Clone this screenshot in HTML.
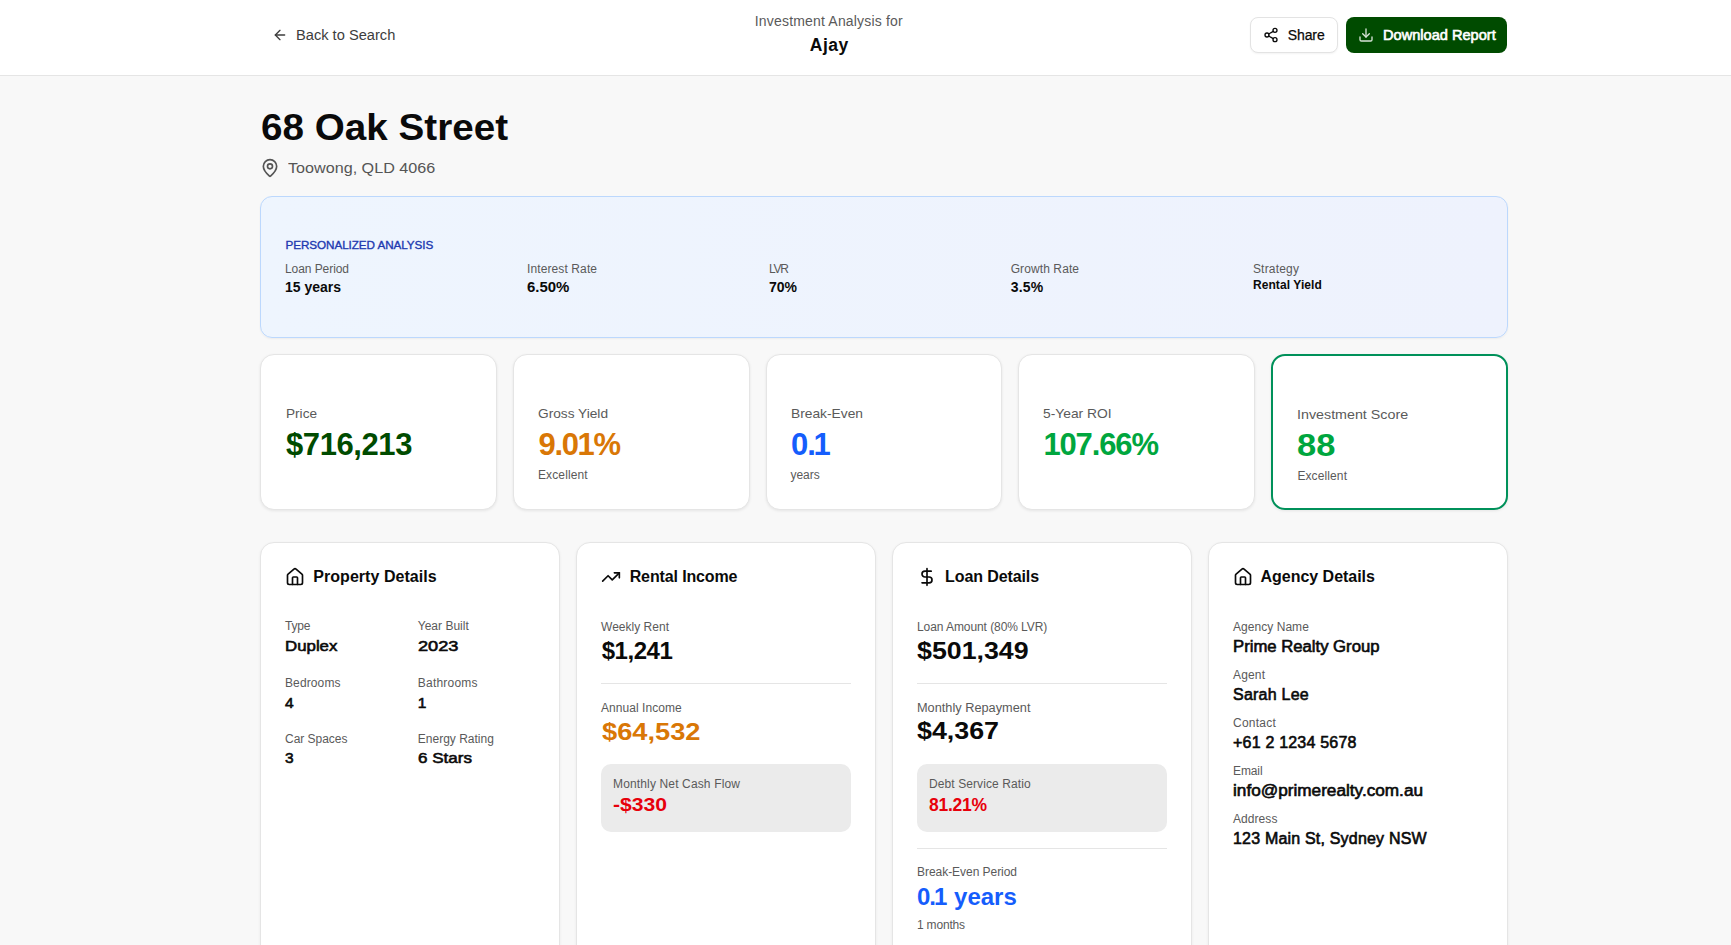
<!DOCTYPE html>
<html><head><meta charset="utf-8"><title>68 Oak Street - Investment Analysis</title>
<style>
html,body{margin:0;padding:0;}
body{width:1731px;height:945px;overflow:hidden;background:#f8f8f8;font-family:"Liberation Sans",sans-serif;position:relative;}
.t{position:absolute;white-space:nowrap;}
</style></head><body>
<div style="position:absolute;left:0px;top:0px;width:1731px;height:76px;box-sizing:border-box;background:#ffffff;border-bottom:1px solid #e5e5e5;"></div>
<div style="position:absolute;left:1250px;top:17px;width:88px;height:36px;box-sizing:border-box;background:#fff;border:1px solid #e3e3e3;border-radius:8px;box-shadow:0 1px 2px rgba(0,0,0,0.05);"></div>
<div style="position:absolute;left:1346px;top:17px;width:161px;height:36px;box-sizing:border-box;background:#004b00;border-radius:8px;"></div>
<div style="position:absolute;left:260px;top:196px;width:1248px;height:142px;box-sizing:border-box;background:linear-gradient(90deg,#eef5fe,#eef2fd);border:1px solid #bcd8fd;border-radius:12px;box-shadow:0 1px 2px rgba(0,0,0,0.05);"></div>
<div style="position:absolute;left:260.0px;top:354px;width:236.8px;height:156px;box-sizing:border-box;background:#fff;border:1px solid #e5e5e5;border-radius:14px;box-shadow:0 1px 3px rgba(0,0,0,0.08);"></div>
<div style="position:absolute;left:512.8px;top:354px;width:236.8px;height:156px;box-sizing:border-box;background:#fff;border:1px solid #e5e5e5;border-radius:14px;box-shadow:0 1px 3px rgba(0,0,0,0.08);"></div>
<div style="position:absolute;left:765.6px;top:354px;width:236.8px;height:156px;box-sizing:border-box;background:#fff;border:1px solid #e5e5e5;border-radius:14px;box-shadow:0 1px 3px rgba(0,0,0,0.08);"></div>
<div style="position:absolute;left:1018.4px;top:354px;width:236.8px;height:156px;box-sizing:border-box;background:#fff;border:1px solid #e5e5e5;border-radius:14px;box-shadow:0 1px 3px rgba(0,0,0,0.08);"></div>
<div style="position:absolute;left:1271.2px;top:354px;width:236.8px;height:156px;box-sizing:border-box;background:#fff;border:2px solid #00915a;border-radius:14px;box-shadow:0 1px 3px rgba(0,0,0,0.08);"></div>
<div style="position:absolute;left:260px;top:542px;width:300px;height:440px;box-sizing:border-box;background:#fff;border:1px solid #e5e5e5;border-radius:14px;box-shadow:0 1px 3px rgba(0,0,0,0.06);"></div>
<div style="position:absolute;left:576px;top:542px;width:300px;height:440px;box-sizing:border-box;background:#fff;border:1px solid #e5e5e5;border-radius:14px;box-shadow:0 1px 3px rgba(0,0,0,0.06);"></div>
<div style="position:absolute;left:892px;top:542px;width:300px;height:440px;box-sizing:border-box;background:#fff;border:1px solid #e5e5e5;border-radius:14px;box-shadow:0 1px 3px rgba(0,0,0,0.06);"></div>
<div style="position:absolute;left:1208px;top:542px;width:300px;height:440px;box-sizing:border-box;background:#fff;border:1px solid #e5e5e5;border-radius:14px;box-shadow:0 1px 3px rgba(0,0,0,0.06);"></div>
<div style="position:absolute;left:601px;top:683px;width:250px;height:1px;box-sizing:border-box;background:#e5e5e5;"></div>
<div style="position:absolute;left:917px;top:683px;width:250px;height:1px;box-sizing:border-box;background:#e5e5e5;"></div>
<div style="position:absolute;left:917px;top:848px;width:250px;height:1px;box-sizing:border-box;background:#e5e5e5;"></div>
<div style="position:absolute;left:601px;top:764px;width:250px;height:68px;box-sizing:border-box;background:#ebebeb;border-radius:10px;"></div>
<div style="position:absolute;left:917px;top:764px;width:250px;height:68px;box-sizing:border-box;background:#ebebeb;border-radius:10px;"></div>
<svg style="position:absolute;left:272px;top:27px;color:#3d3d3d" width="16" height="16" viewBox="0 0 24 24" fill="none" stroke="currentColor" stroke-width="2" stroke-linecap="round" stroke-linejoin="round"><path d="m12 19-7-7 7-7"/><path d="M19 12H5"/></svg>
<svg style="position:absolute;left:1263px;top:27px;color:#0a0a0a" width="16" height="16" viewBox="0 0 24 24" fill="none" stroke="currentColor" stroke-width="2" stroke-linecap="round" stroke-linejoin="round"><circle cx="18" cy="5" r="3"/><circle cx="6" cy="12" r="3"/><circle cx="18" cy="19" r="3"/><line x1="8.59" x2="15.42" y1="13.51" y2="17.49"/><line x1="15.41" x2="8.59" y1="6.51" y2="10.49"/></svg>
<svg style="position:absolute;left:1358px;top:27px;color:#d7e3d7" width="16" height="16" viewBox="0 0 24 24" fill="none" stroke="currentColor" stroke-width="2" stroke-linecap="round" stroke-linejoin="round"><path d="M21 15v4a2 2 0 0 1-2 2H5a2 2 0 0 1-2-2v-4"/><polyline points="7 10 12 15 17 10"/><line x1="12" x2="12" y1="15" y2="3"/></svg>
<svg style="position:absolute;left:259.5px;top:157.5px;color:#555555" width="20" height="20" viewBox="0 0 24 24" fill="none" stroke="currentColor" stroke-width="2" stroke-linecap="round" stroke-linejoin="round"><path d="M20 10c0 4.993-5.539 10.193-7.399 11.799a1 1 0 0 1-1.202 0C9.539 20.193 4 14.993 4 10a8 8 0 0 1 16 0"/><circle cx="12" cy="10" r="3"/></svg>
<svg style="position:absolute;left:285px;top:566.8px;color:#0a0a0a" width="20" height="20" viewBox="0 0 24 24" fill="none" stroke="currentColor" stroke-width="2" stroke-linecap="round" stroke-linejoin="round"><path d="M15 21v-8a1 1 0 0 0-1-1h-4a1 1 0 0 0-1 1v8"/><path d="M3 10a2 2 0 0 1 .709-1.528l7-5.999a2 2 0 0 1 2.582 0l7 5.999A2 2 0 0 1 21 10v9a2 2 0 0 1-2 2H5a2 2 0 0 1-2-2z"/></svg>
<svg style="position:absolute;left:601px;top:567px;color:#0a0a0a" width="20" height="20" viewBox="0 0 24 24" fill="none" stroke="currentColor" stroke-width="2" stroke-linecap="round" stroke-linejoin="round"><polyline points="22 7 13.5 15.5 8.5 10.5 2 17"/><polyline points="16 7 22 7 22 13"/></svg>
<svg style="position:absolute;left:917px;top:567px;color:#0a0a0a" width="20" height="20" viewBox="0 0 24 24" fill="none" stroke="currentColor" stroke-width="2" stroke-linecap="round" stroke-linejoin="round"><line x1="12" x2="12" y1="2" y2="22"/><path d="M17 5H9.5a3.5 3.5 0 0 0 0 7h5a3.5 3.5 0 0 1 0 7H6"/></svg>
<svg style="position:absolute;left:1233px;top:566.8px;color:#0a0a0a" width="20" height="20" viewBox="0 0 24 24" fill="none" stroke="currentColor" stroke-width="2" stroke-linecap="round" stroke-linejoin="round"><path d="M15 21v-8a1 1 0 0 0-1-1h-4a1 1 0 0 0-1 1v8"/><path d="M3 10a2 2 0 0 1 .709-1.528l7-5.999a2 2 0 0 1 2.582 0l7 5.999A2 2 0 0 1 21 10v9a2 2 0 0 1-2 2H5a2 2 0 0 1-2-2z"/></svg>
<div class="t" style="left:296.00px;top:27.90px;font-size:14px;line-height:14px;color:#3d3d3d;transform:scaleX(1.0458);transform-origin:0 0;">Back to Search</div>
<div class="t" style="left:754.80px;top:14.30px;font-size:14px;line-height:14px;color:#5a5a5a;letter-spacing:0.180px;">Investment Analysis for</div>
<div class="t" style="left:809.80px;top:36.62px;font-size:17.5px;line-height:17.5px;color:#0a0a0a;font-weight:700;letter-spacing:0.450px;">Ajay</div>
<div class="t" style="left:1287.70px;top:27.80px;font-size:14px;line-height:14px;color:#0a0a0a;letter-spacing:-0.088px;-webkit-text-stroke:0.25px #0a0a0a;">Share</div>
<div class="t" style="left:1382.50px;top:27.90px;font-size:14px;line-height:14px;color:#ffffff;-webkit-text-stroke:0.6px currentColor;transform:scaleX(1.0421);transform-origin:0 0;">Download Report</div>
<div class="t" style="left:261.00px;top:109.05px;font-size:37px;line-height:37px;color:#0a0a0a;font-weight:700;transform:scaleX(1.0444);transform-origin:0 0;">68 Oak Street</div>
<div class="t" style="left:287.50px;top:160.02px;font-size:15.5px;line-height:15.5px;color:#555555;transform:scaleX(1.0418);transform-origin:0 0;">Toowong, QLD 4066</div>
<div class="t" style="left:285.50px;top:238.96px;font-size:11.7px;line-height:11.7px;color:#2139b0;letter-spacing:-0.072px;-webkit-text-stroke:0.35px currentColor;">PERSONALIZED ANALYSIS</div>
<div class="t" style="left:285.00px;top:262.70px;font-size:12px;line-height:12px;color:#5a5a5a;letter-spacing:-0.070px;">Loan Period</div>
<div class="t" style="left:285.00px;top:280.00px;font-size:14px;line-height:14px;color:#0a0a0a;font-weight:700;">15 years</div>
<div class="t" style="left:527.00px;top:262.70px;font-size:12px;line-height:12px;color:#5a5a5a;letter-spacing:0.108px;">Interest Rate</div>
<div class="t" style="left:527.00px;top:280.00px;font-size:14px;line-height:14px;color:#0a0a0a;font-weight:700;transform:scaleX(1.0680);transform-origin:0 0;">6.50%</div>
<div class="t" style="left:769.00px;top:262.70px;font-size:12px;line-height:12px;color:#5a5a5a;letter-spacing:-1.225px;">LVR</div>
<div class="t" style="left:769.00px;top:280.00px;font-size:14px;line-height:14px;color:#0a0a0a;font-weight:700;">70%</div>
<div class="t" style="left:1010.70px;top:262.70px;font-size:12px;line-height:12px;color:#5a5a5a;letter-spacing:0.095px;">Growth Rate</div>
<div class="t" style="left:1010.70px;top:280.00px;font-size:14px;line-height:14px;color:#0a0a0a;font-weight:700;letter-spacing:0.167px;">3.5%</div>
<div class="t" style="left:1252.90px;top:262.70px;font-size:12px;line-height:12px;color:#5a5a5a;letter-spacing:0.200px;">Strategy</div>
<div class="t" style="left:1252.90px;top:278.70px;font-size:12px;line-height:12px;color:#0a0a0a;font-weight:700;letter-spacing:0.086px;">Rental Yield</div>
<div class="t" style="left:285.70px;top:406.55px;font-size:13px;line-height:13px;color:#5a5a5a;transform:scaleX(1.0473);transform-origin:0 0;">Price</div>
<div class="t" style="left:286.00px;top:428.65px;font-size:31px;line-height:31px;color:#004b00;font-weight:700;letter-spacing:-0.414px;">$716,213</div>
<div class="t" style="left:538.00px;top:406.55px;font-size:13px;line-height:13px;color:#5a5a5a;transform:scaleX(1.0534);transform-origin:0 0;">Gross Yield</div>
<div class="t" style="left:538.60px;top:428.65px;font-size:31px;line-height:31px;color:#d97706;font-weight:700;letter-spacing:-1.375px;">9.01%</div>
<div class="t" style="left:538.00px;top:468.70px;font-size:12px;line-height:12px;color:#5a5a5a;letter-spacing:0.112px;">Excellent</div>
<div class="t" style="left:791.00px;top:406.55px;font-size:13px;line-height:13px;color:#5a5a5a;transform:scaleX(1.0604);transform-origin:0 0;">Break-Even</div>
<div class="t" style="left:791.00px;top:428.65px;font-size:31px;line-height:31px;color:#155dfc;font-weight:700;">0<span style="margin-left:-1px">.</span><span style="margin-left:-2.5px">1</span></div>
<div class="t" style="left:790.40px;top:468.70px;font-size:12px;line-height:12px;color:#5a5a5a;letter-spacing:-0.013px;">years</div>
<div class="t" style="left:1043.00px;top:406.55px;font-size:13px;line-height:13px;color:#5a5a5a;transform:scaleX(1.0627);transform-origin:0 0;">5-Year ROI</div>
<div class="t" style="left:1043.40px;top:428.65px;font-size:31px;line-height:31px;color:#00a63e;font-weight:700;letter-spacing:-1.133px;">107.66%</div>
<div class="t" style="left:1297.40px;top:407.65px;font-size:13px;line-height:13px;color:#5a5a5a;transform:scaleX(1.0984);transform-origin:0 0;">Investment Score</div>
<div class="t" style="left:1297.40px;top:429.85px;font-size:31px;line-height:31px;color:#00a63e;font-weight:700;transform:scaleX(1.1130);transform-origin:0 0;">88</div>
<div class="t" style="left:1297.40px;top:470.10px;font-size:12px;line-height:12px;color:#5a5a5a;letter-spacing:0.112px;">Excellent</div>
<div class="t" style="left:313.30px;top:568.70px;font-size:16px;line-height:16px;color:#0a0a0a;font-weight:700;letter-spacing:0.040px;">Property Details</div>
<div class="t" style="left:629.70px;top:568.70px;font-size:16px;line-height:16px;color:#0a0a0a;font-weight:700;letter-spacing:-0.129px;">Rental Income</div>
<div class="t" style="left:945.10px;top:568.70px;font-size:16px;line-height:16px;color:#0a0a0a;font-weight:700;letter-spacing:-0.105px;">Loan Details</div>
<div class="t" style="left:1260.60px;top:568.70px;font-size:16px;line-height:16px;color:#0a0a0a;font-weight:700;letter-spacing:-0.031px;">Agency Details</div>
<div class="t" style="left:285.00px;top:620.30px;font-size:12px;line-height:12px;color:#5a5a5a;letter-spacing:-0.200px;">Type</div>
<div class="t" style="left:285.00px;top:638.33px;font-size:15.5px;line-height:15.5px;color:#0a0a0a;-webkit-text-stroke:0.6px currentColor;transform:scaleX(1.0860);transform-origin:0 0;">Duplex</div>
<div class="t" style="left:417.80px;top:620.30px;font-size:12px;line-height:12px;color:#5a5a5a;">Year Built</div>
<div class="t" style="left:417.80px;top:638.33px;font-size:15.5px;line-height:15.5px;color:#0a0a0a;-webkit-text-stroke:0.6px currentColor;transform:scaleX(1.1739);transform-origin:0 0;">2023</div>
<div class="t" style="left:285.00px;top:676.80px;font-size:12px;line-height:12px;color:#5a5a5a;letter-spacing:0.114px;">Bedrooms</div>
<div class="t" style="left:285.00px;top:694.53px;font-size:15.5px;line-height:15.5px;color:#0a0a0a;-webkit-text-stroke:0.6px currentColor;">4</div>
<div class="t" style="left:417.80px;top:676.80px;font-size:12px;line-height:12px;color:#5a5a5a;letter-spacing:0.219px;">Bathrooms</div>
<div class="t" style="left:417.80px;top:694.53px;font-size:15.5px;line-height:15.5px;color:#0a0a0a;-webkit-text-stroke:0.6px currentColor;">1</div>
<div class="t" style="left:285.00px;top:732.80px;font-size:12px;line-height:12px;color:#5a5a5a;letter-spacing:-0.022px;">Car Spaces</div>
<div class="t" style="left:285.00px;top:750.43px;font-size:15.5px;line-height:15.5px;color:#0a0a0a;-webkit-text-stroke:0.6px currentColor;">3</div>
<div class="t" style="left:417.80px;top:732.80px;font-size:12px;line-height:12px;color:#5a5a5a;">Energy Rating</div>
<div class="t" style="left:417.80px;top:750.43px;font-size:15.5px;line-height:15.5px;color:#0a0a0a;-webkit-text-stroke:0.6px currentColor;transform:scaleX(1.0998);transform-origin:0 0;">6 Stars</div>
<div class="t" style="left:601.00px;top:621.00px;font-size:12px;line-height:12px;color:#5a5a5a;letter-spacing:0.020px;">Weekly Rent</div>
<div class="t" style="left:601.70px;top:638.50px;font-size:24px;line-height:24px;color:#0a0a0a;font-weight:700;letter-spacing:-0.460px;">$1,241</div>
<div class="t" style="left:600.90px;top:701.80px;font-size:12px;line-height:12px;color:#5a5a5a;letter-spacing:0.062px;">Annual Income</div>
<div class="t" style="left:601.70px;top:719.60px;font-size:24px;line-height:24px;color:#d97706;font-weight:700;transform:scaleX(1.1354);transform-origin:0 0;">$64,532</div>
<div class="t" style="left:613.00px;top:777.60px;font-size:12px;line-height:12px;color:#5a5a5a;letter-spacing:0.145px;">Monthly Net Cash Flow</div>
<div class="t" style="left:613.00px;top:797.33px;font-size:17.5px;line-height:17.5px;color:#e7000b;font-weight:700;transform:scaleX(1.2067);transform-origin:0 0;">-$330</div>
<div class="t" style="left:917.00px;top:620.80px;font-size:12px;line-height:12px;color:#5a5a5a;letter-spacing:-0.077px;">Loan Amount (80% LVR)</div>
<div class="t" style="left:917.00px;top:638.70px;font-size:24px;line-height:24px;color:#0a0a0a;font-weight:700;transform:scaleX(1.1149);transform-origin:0 0;">$501,349</div>
<div class="t" style="left:917.00px;top:702.00px;font-size:12px;line-height:12px;color:#5a5a5a;transform:scaleX(1.0628);transform-origin:0 0;">Monthly Repayment</div>
<div class="t" style="left:917.00px;top:719.40px;font-size:24px;line-height:24px;color:#0a0a0a;font-weight:700;transform:scaleX(1.1172);transform-origin:0 0;">$4,367</div>
<div class="t" style="left:929.00px;top:777.60px;font-size:12px;line-height:12px;color:#5a5a5a;letter-spacing:0.091px;">Debt Service Ratio</div>
<div class="t" style="left:929.00px;top:797.33px;font-size:17.5px;line-height:17.5px;color:#e7000b;font-weight:700;letter-spacing:-0.270px;">81.21%</div>
<div class="t" style="left:917.00px;top:866.40px;font-size:12px;line-height:12px;color:#5a5a5a;letter-spacing:-0.044px;">Break-Even Period</div>
<div class="t" style="left:917.00px;top:885.30px;font-size:24px;line-height:24px;color:#155dfc;font-weight:700;">0<span style="margin-left:-1px">.</span><span style="margin-left:-2px">1</span> years</div>
<div class="t" style="left:917.00px;top:918.70px;font-size:12px;line-height:12px;color:#5a5a5a;letter-spacing:-0.193px;">1 months</div>
<div class="t" style="left:1233.00px;top:621.00px;font-size:12px;line-height:12px;color:#5a5a5a;letter-spacing:0.045px;">Agency Name</div>
<div class="t" style="left:1233.00px;top:639.30px;font-size:16px;line-height:16px;color:#0a0a0a;-webkit-text-stroke:0.6px currentColor;transform:scaleX(1.0427);transform-origin:0 0;">Prime Realty Group</div>
<div class="t" style="left:1233.00px;top:668.80px;font-size:12px;line-height:12px;color:#5a5a5a;letter-spacing:0.162px;">Agent</div>
<div class="t" style="left:1233.00px;top:687.20px;font-size:16px;line-height:16px;color:#0a0a0a;-webkit-text-stroke:0.6px currentColor;letter-spacing:0.231px;">Sarah Lee</div>
<div class="t" style="left:1233.00px;top:716.70px;font-size:12px;line-height:12px;color:#5a5a5a;letter-spacing:0.242px;">Contact</div>
<div class="t" style="left:1233.00px;top:735.30px;font-size:16px;line-height:16px;color:#0a0a0a;-webkit-text-stroke:0.6px currentColor;letter-spacing:0.204px;">+61 2 1234 5678</div>
<div class="t" style="left:1233.00px;top:764.80px;font-size:12px;line-height:12px;color:#5a5a5a;letter-spacing:-0.100px;">Email</div>
<div class="t" style="left:1233.00px;top:783.40px;font-size:16px;line-height:16px;color:#0a0a0a;-webkit-text-stroke:0.6px currentColor;transform:scaleX(1.0741);transform-origin:0 0;">info@primerealty.com.au</div>
<div class="t" style="left:1233.00px;top:812.80px;font-size:12px;line-height:12px;color:#5a5a5a;letter-spacing:0.067px;">Address</div>
<div class="t" style="left:1233.00px;top:831.30px;font-size:16px;line-height:16px;color:#0a0a0a;-webkit-text-stroke:0.6px currentColor;letter-spacing:0.191px;">123 Main St, Sydney NSW</div>
</body></html>
